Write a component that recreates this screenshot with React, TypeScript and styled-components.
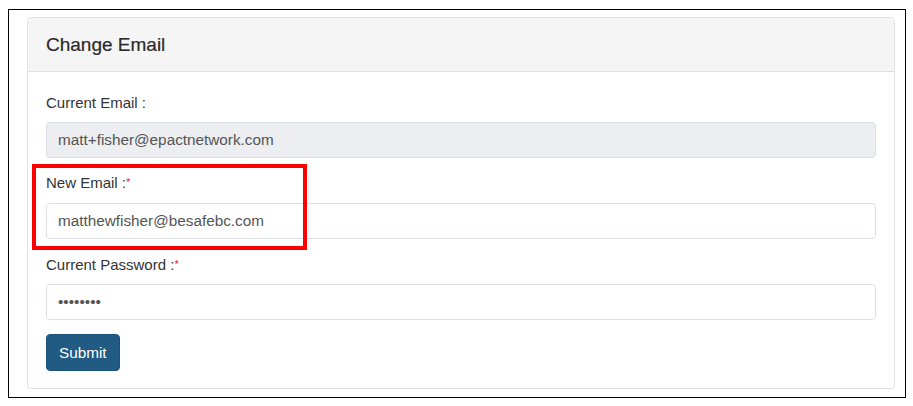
import styled, { createGlobalStyle } from "styled-components";

const GlobalStyle = createGlobalStyle`
  html, body {
    margin: 0;
    padding: 0;
    background: #fff;
  }
  body {
    font-family: "Liberation Sans", Arial, sans-serif;
    color: #333;
  }
`;

const Frame = styled.div`
  position: relative;
  box-sizing: border-box;
  margin: 9px 0 0 8px;
  width: 898px;
  height: 389px;
  border: 1px solid #000;
  padding: 7px 10px 8px 18px;
`;

const Panel = styled.div`
  box-sizing: border-box;
  height: 100%;
  border: 1px solid #e2e2e2;
  border-radius: 4px;
  background: #fff;
  overflow: hidden;
`;

const PanelHeader = styled.div`
  box-sizing: border-box;
  height: 54px;
  display: flex;
  align-items: center;
  padding: 0 18px;
  background: #f5f5f5;
  border-bottom: 1px solid #e0e0e0;
`;

const Title = styled.h3`
  margin: 0;
  font-size: 19px;
  font-weight: 400;
  color: #2a2a2a;
  -webkit-text-stroke: 0.2px #2a2a2a;
`;

const PanelBody = styled.form`
  display: flex;
  flex-direction: column;
  padding: 21px 18px 0 18px;
`;

const Field = styled.div<{ $gap: number; $after: number }>`
  display: flex;
  flex-direction: column;
  gap: ${(p) => p.$gap}px;
  margin-bottom: ${(p) => p.$after}px;
`;

const Label = styled.label`
  font-size: 15px;
  line-height: 20px;
  color: #333;
`;

const Required = styled.span`
  color: #e4252b;
  font-size: 11px;
  vertical-align: top;
  position: relative;
  top: -1px;
`;

const Input = styled.input<{ $disabled?: boolean }>`
  box-sizing: border-box;
  width: 100%;
  height: 36px;
  padding: 0 11px;
  border: 1px solid ${(p) => (p.$disabled ? "#dcdfe3" : "#dde0e4")};
  border-radius: 4px;
  background: ${(p) => (p.$disabled ? "#eceef1" : "#fff")};
  font-family: "Liberation Sans", Arial, sans-serif;
  font-size: 15.3px;
  color: #555;
  outline: none;
`;

const SubmitButton = styled.button`
  align-self: flex-start;
  box-sizing: border-box;
  height: 37px;
  padding: 0 12px;
  border: 1px solid #1d5278;
  border-radius: 4px;
  background: #215a82;
  color: #fff;
  font-family: "Liberation Sans", Arial, sans-serif;
  font-size: 15.3px;
`;

const Highlight = styled.div`
  position: absolute;
  left: 23px;
  top: 154px;
  width: 275px;
  height: 86px;
  box-sizing: border-box;
  border: 4px solid #f00;
  pointer-events: none;
`;

export default function App() {
  return (
    <>
      <GlobalStyle />
      <Frame>
        <Panel>
          <PanelHeader>
            <Title>Change Email</Title>
          </PanelHeader>
          <PanelBody onSubmit={(e) => e.preventDefault()}>
            <Field $gap={9} $after={15}>
              <Label>Current Email :</Label>
              <Input $disabled readOnly value="matt+fisher@epactnetwork.com" />
            </Field>
            <Field $gap={10} $after={16}>
              <Label>
                New Email :<Required>*</Required>
              </Label>
              <Input readOnly value="matthewfisher@besafebc.com" />
            </Field>
            <Field $gap={9} $after={14}>
              <Label>
                Current Password :<Required>*</Required>
              </Label>
              <Input readOnly value="••••••••" />
            </Field>
            <SubmitButton type="submit">Submit</SubmitButton>
          </PanelBody>
        </Panel>
        <Highlight />
      </Frame>
    </>
  );
}
